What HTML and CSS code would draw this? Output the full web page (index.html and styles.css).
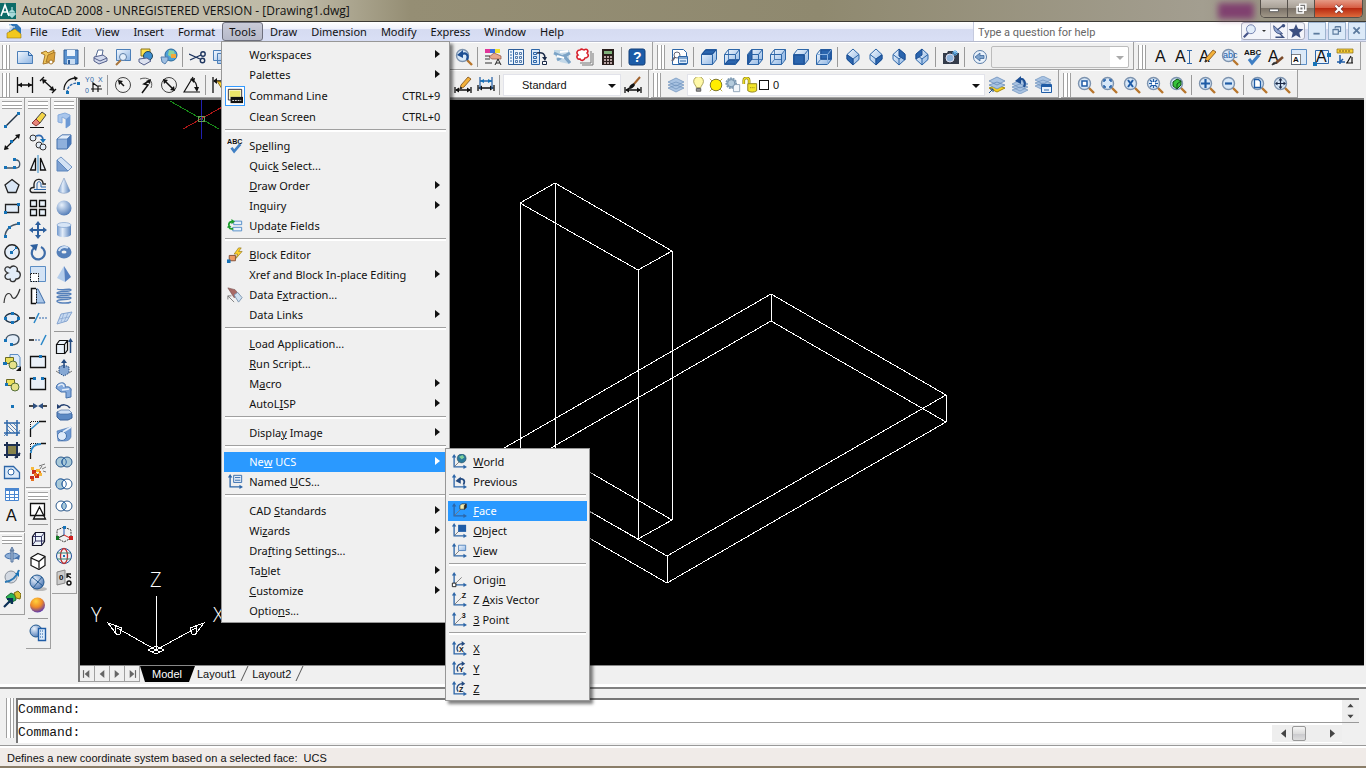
FILE: index.html
```
<!doctype html>
<html lang="en">
  <head>
    <meta charset="UTF-8" />
    <title>AutoCAD 2008 - [Drawing1.dwg]</title>
    <link rel="stylesheet" href="styles.css">
  </head>
  <body>
    <!-- shared icon parts -->
    <svg class="defs" width="0" height="0" aria-hidden="true">
      <defs>
        <linearGradient id="sky" x1="0" y1="0" x2="1" y2="1">
          <stop offset="0" stop-color="#f4f9ff" />
          <stop offset="1" stop-color="#8db4e2" />
        </linearGradient>
        <linearGradient id="solid" x1="0" y1="0" x2="1" y2="0">
          <stop offset="0" stop-color="#6f97cc" />
          <stop offset=".4" stop-color="#e3edf9" />
          <stop offset="1" stop-color="#5580ba" />
        </linearGradient>
        <radialGradient id="ball" cx=".35" cy=".3" r=".8">
          <stop offset="0" stop-color="#e8f1fc" />
          <stop offset="1" stop-color="#4471b0" />
        </radialGradient>
        <radialGradient id="sunset" cx=".4" cy=".25" r=".8">
          <stop offset="0" stop-color="#ffd23c" />
          <stop offset=".5" stop-color="#f08a28" />
          <stop offset="1" stop-color="#4a2fc0" />
        </radialGradient>
      </defs>
      <symbol id="mag" viewBox="0 0 18 18">
        <path d="M11 11l6 6" stroke="#b8762c" stroke-width="2.4" />
        <circle cx="7.5" cy="7.5" r="6" fill="#d8e8f8" stroke="#7d93ae" stroke-width="1.4" />
      </symbol>
      <symbol id="axes" viewBox="0 0 18 18">
        <path d="M3.5 3v11.5H15" stroke="#2d66a8" stroke-width="1.5" />
        <path d="M3.5 0L1 4h5zM18 14.5l-4-2.5v5z" fill="#2d66a8" stroke="none" />
      </symbol>
      <symbol id="turn" viewBox="0 0 18 18">
        <path d="M8 12C5 7 8 3 13 3" stroke="#234a80" stroke-width="1.5" />
        <path d="M12 0l4 3-4 3z" fill="#234a80" stroke="none" />
      </symbol>
      <symbol id="cube" viewBox="0 0 18 18">
        <path d="M1.5 6.5l4-5h11v10l-4 5h-11z" fill="url(#sky)" stroke="#2d66a8" />
        <path d="M1.5 6.5h11v10M12.5 6.5l4-5" stroke="#2d66a8" />
      </symbol>
      <symbol id="glass" viewBox="0 0 18 18">
        <path d="M1.5 6.5l4-5h11v10l-4 5h-11z" fill="url(#sky)" stroke="#2d66a8" />
        <path d="M5.5 1.5v10h11M5.5 11.5l-4 5" stroke="#2d66a8" stroke-width=".8" />
      </symbol>
      <symbol id="iso" viewBox="0 0 18 18">
        <path d="M9 1l6 5.5v5L9 17l-6-5.5v-5z" fill="url(#sky)" stroke="#2d66a8" />
        <path d="M3 6.5L9 11l6-4.5M9 11v6" stroke="#2d66a8" />
      </symbol>
      <symbol id="rings" viewBox="0 0 18 18">
        <circle cx="6" cy="9" r="5" /><circle cx="12" cy="9" r="5" />
      </symbol>
      <symbol id="layers" viewBox="0 0 18 18">
        <path d="M1 12l8-3 8 3-8 4zM1 9l8-3 8 3-8 4zM1 6l8-4 8 4-8 4z" fill="#a9c3e2" stroke="#6d90bb" stroke-width=".7" />
      </symbol>
      <symbol id="dim" viewBox="0 0 18 18">
        <path d="M1 11v6M17 11v6M2 14h14" stroke="#111" stroke-width="1.3" />
        <path d="M1 14l4-2.500v5zM17 14l-4-2.500v5z" fill="#111" stroke="none" />
      </symbol>
      <symbol id="pencil" viewBox="0 0 18 18">
        <path d="M5 13l1-4 7-8 3 2-7 8z" fill="#f3b13a" stroke="#7a4a14" stroke-width=".8" />
        <path d="M5 13l2-1-1.3-1z" fill="#111" />
      </symbol>
    </svg>

    <header class="titlebar">
      <svg class="ico app-logo" viewBox="0 0 16 16" aria-hidden="true">
        <path d="M0 0h16v16H0z" fill="#0d6b68" stroke="none" />
        <path d="M1 13L5 2l4 11M2 9h5" stroke="#fff" stroke-width="1.6" />
        <path d="M7 11h9M12 4v11M10 8h4v5h-4z" stroke="#dff" />
      </svg>
      <h1>AutoCAD 2008 - UNREGISTERED VERSION - [Drawing1.dwg]</h1>
      <span class="glass-spot"></span>
      <div class="window-buttons">
        <button aria-label="Minimize"><svg class="ico" viewBox="0 0 18 18"><path d="M4 9h10v3H4z" fill="#fff" stroke="#555" /></svg></button>
        <button aria-label="Restore"><svg class="ico" viewBox="0 0 18 18"><path d="M7.5 3.500h7v7h-7zM4.5 6.500h7v7h-7z" fill="#777" stroke="#fff" stroke-width="1.6" /></svg></button>
        <button class="close" aria-label="Close"><svg class="ico" viewBox="0 0 18 18"><path d="M5 5l8 8M13 5l-8 8" stroke="#733" stroke-width="4" /><path d="M5 5l8 8M13 5l-8 8" stroke="#fff" stroke-width="2.5" /></svg></button>
      </div>
    </header>

    <nav class="menubar">
      <svg class="ico" viewBox="0 0 18 18" aria-hidden="true">
        <path d="M4 2h8l4 4v10H4z" fill="#2e75b8" stroke="none" />
        <path d="M2 16V11l8-4 6 5v4z" fill="#f2c81e" stroke="#9a7a12" stroke-width=".6" />
        <path d="M1 5h9M5 1v8M4 4h3v3H4z" stroke="#fff" />
      </svg>
      <ul class="menus">
        <li><button>File</button></li>
        <li><button>Edit</button></li>
        <li><button>View</button></li>
        <li><button>Insert</button></li>
        <li><button>Format</button></li>
        <li class="open">
          <button aria-expanded="true">Tools</button>
          <ul class="menu">
            <li class="sub"><button>W<u>o</u>rkspaces</button></li>
            <li class="sub"><button>Palettes</button></li>
            <li class="checked"><button><svg class="ico" viewBox="0 0 18 18"><path d="M1.5 1.500h15v12h-15z" fill="#fffbe0" stroke="#223" /><path d="M3 3h12v7H3z" fill="#ece66a" stroke="none" /><path d="M4 10h14v7H4z" fill="#111" stroke="none" /><path d="M6 14h10" stroke="#fff" stroke-dasharray="2 1" /></svg>Command Line<kbd>CTRL+9</kbd></button></li>
            <li><button>Clean Screen<kbd>CTRL+0</kbd></button></li>
            <li class="rule"></li>
            <li><button><svg class="ico" viewBox="0 0 18 18"><text x="0" y="7" class="tiny">ABC</text><path d="M5 11l3 4 7-8" stroke="#3f7fc4" stroke-width="3" /></svg>Sp<u>e</u>lling</button></li>
            <li><button>Quic<u>k</u> Select...</button></li>
            <li class="sub"><button><u>D</u>raw Order</button></li>
            <li class="sub"><button>In<u>q</u>uiry</button></li>
            <li><button><svg class="ico" viewBox="0 0 18 18"><path d="M7.5 3.500h9v4h-9zM6.5 10.500h10v4h-10z" fill="#e7f1fb" stroke="#4a86c4" /><path d="M2 8c0-3 1-4 4-4M7 12c-3 1-4 0-5-2" stroke="#1a9c2b" stroke-width="2" /><path d="M5 1l4 3-4 3zM0 11l2-4 3 3z" fill="#1a9c2b" stroke="none" /></svg>Upda<u>t</u>e Fields</button></li>
            <li class="rule"></li>
            <li><button><svg class="ico" viewBox="0 0 18 18"><path d="M2.5 9.500h7v6h-7z" fill="#ef9a63" stroke="#7c4a33" /><path d="M0 14h4v4H0z" class="node" /><path d="M13 1L8 8h4l-2 5 7-8h-4l3-4z" fill="#ffd42a" stroke="#8a6a10" stroke-width=".7" /></svg><u>B</u>lock Editor</button></li>
            <li class="sub"><button>Xref and Block In-place Editing</button></li>
            <li><button><svg class="ico" viewBox="0 0 18 18"><path d="M1 1l8 2 4 5-5 4z" fill="#a86a66" stroke="#7b5350" stroke-width=".7" /><path d="M8 9l4-3 5 6-4 5z" fill="#cfe0f0" stroke="#7890ab" /><path d="M1 10l7 7M1 14v-4h4" class="gray" /></svg>Data E<u>x</u>traction...</button></li>
            <li class="sub"><button>Data Links</button></li>
            <li class="rule"></li>
            <li><button><u>L</u>oad Application...</button></li>
            <li><button><u>R</u>un Script...</button></li>
            <li class="sub"><button>M<u>a</u>cro</button></li>
            <li class="sub"><button>AutoL<u>I</u>SP</button></li>
            <li class="rule"></li>
            <li class="sub"><button>Displa<u>y</u> Image</button></li>
            <li class="rule"></li>
            <li class="sub active">
              <button aria-expanded="true">Ne<u>w</u> UCS</button>
              <ul class="menu submenu">
                <li><button><svg class="ico" viewBox="0 0 18 18"><use href="#axes" /><path d="M4 14l6-6" class="gray" /><circle cx="12" cy="5" r="5" fill="#2c7a9c" stroke="#245" stroke-width=".6" /><path d="M9 3l4-2 2 3-3 2z" fill="#7fd09a" stroke="none" /></svg><u>W</u>orld</button></li>
                <li><button><svg class="ico" viewBox="0 0 18 18"><use href="#axes" /><path d="M14 12c3-6-2-8-6-5" stroke="#234a80" stroke-width="2" /><path d="M5 8l6-5v8z" fill="#234a80" stroke="none" /></svg>Previous</button></li>
                <li class="rule"></li>
                <li class="active"><button><svg class="ico" viewBox="0 0 18 18"><use href="#axes" /><path d="M4 14l7-7" class="gray" /><path d="M10 3l2-2h5v4l-2 2h-5z" fill="#f3ecae" stroke="#333" stroke-width=".8" /><path d="M15 3l2-2v4l-2 2z" fill="#222" /></svg><u>F</u>ace</button></li>
                <li><button><svg class="ico" viewBox="0 0 18 18"><use href="#axes" /><path d="M4 14l5-5" class="gray" /><path d="M8 2h9v8H8z" fill="#1f5ca6" stroke="none" /></svg><u>O</u>bject</button></li>
                <li><button><svg class="ico" viewBox="0 0 18 18"><use href="#axes" /><path d="M4 14l5-5" class="gray" /><path d="M8.5 2.500h8v6h-8z" fill="url(#sky)" stroke="#4f81bb" /></svg><u>V</u>iew</button></li>
                <li class="rule"></li>
                <li><button><svg class="ico" viewBox="0 0 18 18"><use href="#axes" /><path d="M4 14l8-8" class="gray" /><path d="M1.5 12.500h4v4h-4z" fill="#fff" stroke="#111" /></svg>Origi<u>n</u></button></li>
                <li><button><svg class="ico" viewBox="0 0 18 18"><use href="#axes" /><path d="M4 14l8-8" class="gray" /><text x="12" y="7" class="tiny">Z</text></svg>Z <u>A</u>xis Vector</button></li>
                <li><button><svg class="ico" viewBox="0 0 18 18"><use href="#axes" /><path d="M4 14l8-8" class="gray" /><text x="12" y="7" class="tiny">3</text></svg><u>3</u> Point</button></li>
                <li class="rule"></li>
                <li><button><svg class="ico" viewBox="0 0 18 18"><use href="#axes" /><use href="#turn" /><text x="9" y="12" class="tiny">X</text></svg><u>X</u></button></li>
                <li><button><svg class="ico" viewBox="0 0 18 18"><use href="#axes" /><use href="#turn" /><text x="9" y="12" class="tiny">Y</text></svg><u>Y</u></button></li>
                <li><button><svg class="ico" viewBox="0 0 18 18"><use href="#axes" /><use href="#turn" /><text x="9" y="12" class="tiny">Z</text></svg><u>Z</u></button></li>
              </ul>
            </li>
            <li><button><svg class="ico" viewBox="0 0 18 18"><use href="#axes" /><path d="M7.5 1.500h9v8h-9z" fill="#e4eefa" stroke="#2d66a8" /><path d="M9 4h6M9 7h6" class="blue" /></svg>Named <u>U</u>CS...</button></li>
            <li class="rule"></li>
            <li class="sub"><button>CAD <u>S</u>tandards</button></li>
            <li class="sub"><button>Wi<u>z</u>ards</button></li>
            <li><button>Dra<u>f</u>ting Settings...</button></li>
            <li class="sub"><button>Ta<u>b</u>let</button></li>
            <li class="sub"><button><u>C</u>ustomize</button></li>
            <li><button>Optio<u>n</u>s...</button></li>
          </ul>
        </li>
        <li><button>Draw</button></li>
        <li><button>Dimension</button></li>
        <li><button>Modify</button></li>
        <li><button>Express</button></li>
        <li><button>Window</button></li>
        <li><button>Help</button></li>
      </ul>
      <input class="ask" type="text" placeholder="Type a question for help" aria-label="Type a question for help">
      <div class="info-buttons">
        <button aria-label="Search"><svg class="ico" viewBox="0 0 18 18"><path d="M7 11l-5 5" stroke="#46558a" stroke-width="2.5" /><circle cx="10" cy="7" r="5" fill="#e2ecfa" stroke="#6878a8" /></svg></button>
        <button class="drop" aria-label="Search options"></button>
        <button aria-label="Communication Center"><svg class="ico" viewBox="0 0 18 18"><path d="M3 3c0 7 4 10 10 9z" fill="#8fa4cf" stroke="#3d5080" /><path d="M7 8l6-5M5 16h9l-4-4" stroke="#3d5080" stroke-width="1.5" /><circle cx="14" cy="3" r="2" fill="#3d5080" stroke="none" /></svg></button>
        <button aria-label="Favorites"><svg class="ico" viewBox="0 0 18 18"><path d="M9 1l2.3 5.500 6 .5-4.6 4 1.4 6L9 13.800 3.900 17l1.400-6L.7 7l6-.5z" fill="#3d5080" stroke="none" /></svg></button>
      </div>
      <div class="doc-buttons">
        <button aria-label="Minimize drawing"><svg class="ico" viewBox="0 0 18 18"><path d="M5 12h7" stroke="#5b7a9d" stroke-width="2" /></svg></button>
        <button aria-label="Restore drawing"><svg class="ico" viewBox="0 0 18 18"><path d="M7 6V4.500h6v5h-2M4.500 7.500h6v5h-6zM7 4h6M5 7h6" stroke="#5b7a9d" stroke-width="1.3" /></svg></button>
        <button aria-label="Close drawing"><svg class="ico" viewBox="0 0 18 18"><path d="M5 5l7 7M12 5l-7 7" stroke="#5b7a9d" stroke-width="2" /></svg></button>
      </div>
    </nav>

    <div class="toolbar-row">
      <div class="toolbar">
        <span class="grip"></span>
        <button aria-label="New"><svg class="ico" viewBox="0 0 18 18"><path d="M1.5 3.500h11l4 4v8h-15z" fill="url(#sky)" stroke="#4c7fb8" /><path d="M12.5 3.500v4h4" class="blue" /></svg></button>
        <button aria-label="Open"><svg class="ico" viewBox="0 0 18 18"><path d="M2 5l5-2 2 2 6-3-2 12-9 2 2-9z" fill="#f0c85c" stroke="#a8782a" /><path d="M7 14l2-7 7-3-1 10z" fill="#d9a13a" stroke="#a8782a" /><circle cx="12" cy="14" r="2" fill="#fff" stroke="#a8782a" /></svg></button>
        <button aria-label="Save"><svg class="ico" viewBox="0 0 18 18"><path d="M2 2h14v14H2z" fill="#5b92cf" stroke="#2d5d98" /><path d="M5 2h8v6H5z" fill="#eaf3fc" stroke="none" /><path d="M5 11h8v5H5z" fill="#c8dcf2" stroke="none" /><path d="M6 12h2v4H6z" fill="#2d5d98" stroke="none" /></svg></button>
        <span class="sep"></span>
        <button aria-label="Plot"><svg class="ico" viewBox="0 0 18 18"><path d="M5 8l2-6h5l-1 6" fill="#fff" stroke="#556b94" /><path d="M3 9l9-2 4 3v3l-8 3-5-3z" fill="#d2d9ec" stroke="#55608c" /><path d="M3 10l6 3 7-3" stroke="#55608c" /></svg></button>
        <button aria-label="Plot Preview"><svg class="ico" viewBox="0 0 18 18"><path d="M2.5 1.500h14v11h-14z" fill="url(#sky)" stroke="#4c7fb8" /><path d="M7 12l-5 5" stroke="#a8743a" stroke-width="2" /><circle cx="9" cy="9" r="3.5" fill="#e2eefa" stroke="#5d7fa8" /></svg></button>
        <button aria-label="Publish"><svg class="ico" viewBox="0 0 18 18"><path d="M4 1h9v7H4z" fill="#ffe34c" stroke="#8a7420" /><circle cx="11" cy="8" r="4.5" fill="#3f8fd0" stroke="#245" /><path d="M2 11l8-1 4 3-7 4-5-3z" fill="#dde2f0" stroke="#55608c" /></svg></button>
        <button aria-label="3D DWF"><svg class="ico" viewBox="0 0 18 18"><circle cx="11" cy="7" r="6" fill="#4aa0d8" stroke="#2c6898" /><path d="M9 2l5 1 1 4-4 2-3-2z" fill="#8fd49a" stroke="none" /><path d="M11 6h5v4h-5z" fill="#f2a83c" stroke="none" /><path d="M1 9h7v3l-3 4-3-2z" fill="#9fbfe2" stroke="#557fae" /></svg></button>
        <span class="sep"></span>
        <button aria-label="Cut"><svg class="ico" viewBox="0 0 18 18"><path d="M0 6l11 5M1 12l11-5" stroke="#1d355f" stroke-width="1.3" /><circle cx="14" cy="6" r="2.2" stroke="#1d355f" stroke-width="1.4" /><circle cx="13.5" cy="12.5" r="2.2" stroke="#1d355f" stroke-width="1.4" /></svg></button>
        <button aria-label="Copy"><svg class="ico" viewBox="0 0 18 18"><path d="M1.5 2.500h10v10h-10zM5.5 5.500h10v10h-10z" fill="url(#sky)" stroke="#4c7fb8" /></svg></button>
        <button aria-label="Paste"><svg class="ico" viewBox="0 0 18 18"><path d="M3 3h11v13H3z" fill="#d9a13a" stroke="#865" /></svg></button>
        <button aria-label="Match Properties"><svg class="ico" viewBox="0 0 18 18"><use href="#pencil" /></svg></button>
        <button aria-label="Block Editor"><svg class="ico" viewBox="0 0 18 18"><use href="#cube" /></svg></button>
        <span class="sep"></span>
        <button class="wide" aria-label="Undo"><svg class="ico" viewBox="0 0 18 18"><path d="M3 9c3-6 11-4 12 4" class="blue" /></svg></button>
        <button class="wide" aria-label="Redo"><svg class="ico" viewBox="0 0 18 18"><path d="M15 9c-3-6-11-4-12 4" class="blue" /></svg></button>
        <span class="sep"></span>
        <button aria-label="Pan"><svg class="ico" viewBox="0 0 18 18"><path d="M4 9l3-6h6l2 7-4 6H7z" fill="#fff" /></svg></button>
        <button aria-label="Zoom Realtime"><svg class="ico" viewBox="0 0 18 18"><use href="#mag" /></svg></button>
        <button aria-label="Zoom Window"><svg class="ico" viewBox="0 0 18 18"><use href="#mag" /></svg></button>
        <button aria-label="Zoom Previous"><svg class="ico" viewBox="0 0 18 18"><use href="#mag" /><path d="M12 12c2-5-1-8-5-6" stroke="#1d4f94" stroke-width="2.2" /><path d="M2 7l6-5v8z" fill="#1d4f94" stroke="none" /></svg></button>
        <span class="sep"></span>
        <button aria-label="Properties"><svg class="ico" viewBox="0 0 18 18"><path d="M1 1h5v4H1z" fill="#e0359a" stroke="none" /><path d="M6 1h5v4H6z" fill="#3c6fe0" stroke="none" /><path d="M11 1h5v4h-5z" fill="#f0e030" stroke="none" /><path d="M5 9l5-4 7 3v3H8z" fill="#e7a88c" stroke="#8a4f40" stroke-width=".7" /><path d="M1 8h5M1 11h5M1 15h7" stroke="#333" /><path d="M11 17l3-6 3 6M12 15h4" stroke="#222" /></svg></button>
        <button aria-label="DesignCenter"><svg class="ico" viewBox="0 0 18 18"><path d="M1.5 1.500h15v15h-15z" fill="#eef5fc" stroke="#2d5d98" /><path d="M6.5 2v14" class="blue" /><path d="M3 4h2M3 7h2M3 10h2M3 13h2" class="blue" /><path d="M8.5 4.500h2v2h-2zM12.5 4.500h2v2h-2zM8.5 8.500h2v2h-2zM12.5 8.500h2v2h-2zM8.5 12.500h2v2h-2zM12.5 12.500h2v2h-2z" stroke="#2d5d98" stroke-width=".8" /></svg></button>
        <button aria-label="Tool Palettes"><svg class="ico" viewBox="0 0 18 18"><path d="M1.5 1.500h8v15h-8z" fill="#dbe9f8" stroke="#2d66a8" /><path d="M3.5 4.500h3v2h-3zM3.5 8.500h3v2h-3zM3.5 12.500h3v2h-3z" class="blue" /><path d="M7 5c6-1 8 1 8 5" stroke="#1b2a48" stroke-width="1.5" /><path d="M12 9h5l-2 4z" fill="#1b2a48" stroke="none" /><path d="M12.5 13.500h4v3h-4z" fill="#fff" stroke="#1b2a48" /></svg></button>
        <button aria-label="Sheet Set Manager"><svg class="ico" viewBox="0 0 18 18"><path d="M1 2h15v14l-9-2-6-8z" fill="#c3d8e8" stroke="none" /><path d="M1 5l9 4 7-4M4 12l7-4 6 7" stroke="#7ba3c6" stroke-width="3" /><path d="M4 8l7 2M7 4l8-1" stroke="#fff" stroke-width="2" /></svg></button>
        <button aria-label="Markup Set Manager"><svg class="ico" viewBox="0 0 18 18"><path d="M6 17h11V5M4 15h11V3" class="gray" /><path d="M4 2c2-2 3 0 4 0 3-2 5 1 3 3 3 3 0 5-2 5-1 3-4 3-5 1-3 1-4-3-2-4-2-2-1-5 2-5z" fill="#fff" stroke="#d8202c" stroke-width="1.6" /></svg></button>
        <button aria-label="QuickCalc"><svg class="ico" viewBox="0 0 18 18"><path d="M3 1h12v16H3z" fill="#2a1f1c" stroke="none" /><path d="M5 3h8v3H5z" fill="#7fb27a" stroke="none" /><path d="M5 9h8M5 12h8M5 15h8" stroke="#e8d0d0" stroke-width="1.6" stroke-dasharray="2 1" /></svg></button>
        <span class="sep"></span>
        <button aria-label="Help"><svg class="ico" viewBox="0 0 18 18"><rect x="1" y="1" width="16" height="16" rx="2" fill="#1c5ca8" stroke="#123f78" /><text x="5" y="14" class="help-mark">?</text></svg></button>
      </div>

      <div class="toolbar">
        <span class="grip"></span>
        <button aria-label="Named Views"><svg class="ico" viewBox="0 0 18 18"><path d="M1.5 1.500h11l3 3v12h-14z" fill="#fff" stroke="#2d66a8" /><circle cx="6" cy="7" r="3" stroke="#667" /><path d="M4 9l-3 4" stroke="#667" stroke-width="2" /><path d="M7.5 8.500h9v7h-9z" fill="#dcebfa" stroke="#2d66a8" /><path d="M8 10h8M9 13h6" class="blue" /></svg></button>
        <span class="sep"></span>
        <button aria-label="Top"><svg class="ico" viewBox="0 0 18 18"><use href="#cube" /><path d="M2 6l4-4h10l-4 4z" class="face" /></svg></button>
        <button aria-label="Bottom"><svg class="ico" viewBox="0 0 18 18"><use href="#glass" /><path d="M2 16l4-4h10l-4 4z" class="face" /><path d="M1.5 6.500h11v10M12.5 6.500l4-5" class="blue" /></svg></button>
        <button aria-label="Left"><svg class="ico" viewBox="0 0 18 18"><use href="#glass" /><path d="M2 7l4-5v9l-4 5z" class="face" /><path d="M1.5 6.500h11v10M12.5 6.500l4-5" class="blue" /></svg></button>
        <button aria-label="Right"><svg class="ico" viewBox="0 0 18 18"><use href="#glass" /><path d="M1.5 6.500h11v10M12.5 6.500l4-5" class="blue" /><path d="M13 7l3-4v8l-3 4z" fill="#9dbfe8" stroke="none" /></svg></button>
        <button aria-label="Front"><svg class="ico" viewBox="0 0 18 18"><use href="#cube" /><path d="M2 7h10v9H2z" class="face" /></svg></button>
        <button aria-label="Back"><svg class="ico" viewBox="0 0 18 18"><use href="#glass" /><path d="M6 2h10v9H6z" class="face" /><path d="M1.5 6.500h11v10M12.5 6.500l4-5" stroke="#8db4e2" /></svg></button>
        <span class="sep"></span>
        <button aria-label="SW Isometric"><svg class="ico" viewBox="0 0 18 18"><use href="#iso" /><path d="M3 7l6 4v6l-6-6z" class="face" /></svg></button>
        <button aria-label="SE Isometric"><svg class="ico" viewBox="0 0 18 18"><use href="#iso" /><path d="M15 7l-6 4v6l6-6z" class="face" /></svg></button>
        <button aria-label="NE Isometric"><svg class="ico" viewBox="0 0 18 18"><use href="#iso" /><path d="M9 1l6 5v6L9 8z" class="face" /></svg></button>
        <button aria-label="NW Isometric"><svg class="ico" viewBox="0 0 18 18"><use href="#iso" /><path d="M9 1L3 6v5l6-4z" class="face" /></svg></button>
        <span class="sep"></span>
        <button aria-label="Create Camera"><svg class="ico" viewBox="0 0 18 18"><path d="M1 5h4l1-2h5l1 2h5v11H1z" fill="#343c4a" stroke="none" /><circle cx="8" cy="10" r="4" fill="#8fb5dc" stroke="#dde" /><path d="M13 2v6M10 5h6M11 3l4 4M15 3l-4 4" stroke="#59a9e6" /></svg></button>
        <span class="sep"></span>
        <button aria-label="Previous View"><svg class="ico" viewBox="0 0 18 18"><circle cx="9" cy="9" r="6.5" fill="#eaf2fb" stroke="#5a7da8" /><path d="M4 9l5-4v2.500h4v3H9V13z" fill="#7fa3cc" stroke="#2f5c92" stroke-width=".7" /></svg></button>
        <div class="combo view-combo disabled"><select aria-label="View control" disabled><option></option></select></div>
      </div>

      <div class="toolbar">
        <span class="grip"></span>
        <button aria-label="Multiline Text"><svg class="ico" viewBox="0 0 18 18"><text x="3" y="14" class="letter">A</text></svg></button>
        <button aria-label="Single Line Text"><svg class="ico" viewBox="0 0 18 18"><text x="0" y="14" class="letter">A</text><path d="M12 2.500h5M12 15.500h5M14.500 3v12" class="blue" /></svg></button>
        <button aria-label="Edit Text"><svg class="ico" viewBox="0 0 18 18"><text x="1" y="14" class="letter">A</text><use href="#pencil" x="2" y="1" /></svg></button>
        <button aria-label="Find and Replace"><svg class="ico" viewBox="0 0 18 18"><use href="#mag" /><text x="2" y="10" class="small">abc</text></svg></button>
        <button aria-label="Spell Check"><svg class="ico" viewBox="0 0 18 18"><text x="0" y="7" class="tiny">ABC</text><path d="M5 11l3 4 7-8" stroke="#3f7fc4" stroke-width="3" /></svg></button>
        <button aria-label="Text Style"><svg class="ico" viewBox="0 0 18 18"><text x="1" y="14" class="letter">A</text><path d="M9 15l7-6" stroke="#7a4a2a" stroke-width="2.5" /><path d="M5 17c1-3 3-3 5-2z" fill="#222" /></svg></button>
        <button aria-label="Scale Text"><svg class="ico" viewBox="0 0 18 18"><path d="M1.5 1.500h15v15h-15z" fill="#dbe9f8" stroke="#5b8dc4" /><path d="M1.5 6.500h9v10h-9z" fill="#fff" stroke="#111" stroke-dasharray="1 1" /><text x="3" y="14" class="tiny">A</text></svg></button>
        <button aria-label="Justify Text"><svg class="ico" viewBox="0 0 18 18"><path d="M2.5 2.500h13v13h-13z" fill="#eaf2fb" stroke="#2d66a8" /><text x="3" y="14" class="letter">A</text><path d="M0 14h4v4H0zM14 5h4v4h-4z" class="node" /></svg></button>
        <button aria-label="Convert Distance"><svg class="ico" viewBox="0 0 18 18"><path d="M1 1h16v4H1z" fill="#f6cf3a" stroke="#8a6a10" stroke-width=".7" /><path d="M4 2v2M7 2v2M10 2v2M13 2v2" stroke="#7a5a10" /><path d="M4 7v9M1 14h8M3 15l4-4" stroke="#1f5ca6" stroke-width="1.5" /><path d="M11 15l4-7M10 15h7M16 9v6" stroke="#111" stroke-width="1.2" /></svg></button>
      </div>
    </div>

    <div class="toolbar-row">
      <div class="toolbar">
        <span class="grip"></span>
        <button aria-label="Linear"><svg class="ico" viewBox="0 0 18 18"><path d="M1.5 1v16M16.5 1v16M2 9h14" stroke="#111" stroke-width="1.3" /><path d="M2 9l4-2.500v5zM16 9l-4-2.500v5z" class="dot" /></svg></button>
        <button aria-label="Aligned"><svg class="ico" viewBox="0 0 18 18"><path d="M1 5l4-4M13 17l4-4M4 4l11 10" stroke="#111" stroke-width="1.3" /><path d="M3 3l5 1-4 4zM15 15l-5-1 4-4z" class="dot" /></svg></button>
        <button aria-label="Arc Length"><svg class="ico" viewBox="0 0 18 18"><path d="M2 14C2 7 7 2 14 2" stroke="#111" stroke-width="1.3" /><path d="M5 17c0-6 4-10 11-10" stroke="#2d66a8" stroke-dasharray="3 1" stroke-width="1.3" /><path d="M4 15h3v3H4zM15 6h3v3h-3z" class="node" /><path d="M12 0l4 2-3 3z" class="dot" /></svg></button>
        <button aria-label="Ordinate"><svg class="ico" viewBox="0 0 18 18"><text x="0" y="6" class="tiny-blue">Y</text><text x="5" y="6" class="tiny-blue">0</text><text x="13" y="6" class="tiny-blue">X</text><text x="0" y="17" class="tiny-blue">0</text><path d="M8 16V7l4 3h4M6 13h11M13 10v6" stroke="#111" stroke-width="1.2" /></svg></button>
        <span class="sep"></span>
        <button aria-label="Radius"><svg class="ico" viewBox="0 0 18 18"><circle cx="9" cy="9" r="7.5" stroke="#444" /><path d="M5 5l5 5" stroke="#111" stroke-width="1.5" /><path d="M4 4l5 1-4 4z" class="dot" /></svg></button>
        <button aria-label="Jogged"><svg class="ico" viewBox="0 0 18 18"><path d="M3 3c8-3 14 2 11 9" stroke="#555" /><path d="M12 5l-5 3 4 1-6 8" stroke="#111" stroke-width="1.5" /><path d="M14 3l-1 5-4-3z" class="dot" /></svg></button>
        <button aria-label="Diameter"><svg class="ico" viewBox="0 0 18 18"><circle cx="9" cy="9" r="7.5" stroke="#444" /><path d="M4 4l10 10" stroke="#111" stroke-width="1.5" /><path d="M3 3l5 1-4 4zM15 15l-5-1 4-4z" class="dot" /></svg></button>
        <button aria-label="Angular"><svg class="ico" viewBox="0 0 18 18"><path d="M10 1L1 16h16M9 4c4 1 5 5 5 10" stroke="#111" stroke-width="1.2" /><path d="M7 3l5-1-1 5zM14 16l-3-5h5z" class="dot" /></svg></button>
        <span class="sep"></span>
        <button aria-label="Quick Dimension"><svg class="ico" viewBox="0 0 18 18"><path d="M1 1v16M2 5h12" stroke="#111" stroke-width="1.3" /><path d="M1 5l4-3v6z" class="dot" /><path d="M5 5l10 3-3 8z" fill="#ffd42a" stroke="#8a6a10" /></svg></button>
        <button aria-label="Baseline"><svg class="ico" viewBox="0 0 18 18"><use href="#dim" /></svg></button>
        <button aria-label="Continue"><svg class="ico" viewBox="0 0 18 18"><use href="#dim" /></svg></button>
        <span class="sep"></span>
        <button aria-label="Dimension Space"><svg class="ico" viewBox="0 0 18 18"><use href="#dim" /></svg></button>
        <button aria-label="Dimension Break"><svg class="ico" viewBox="0 0 18 18"><use href="#dim" /></svg></button>
        <button aria-label="Tolerance"><svg class="ico" viewBox="0 0 18 18"><path d="M1.5 6.500h15v6h-15z" /></svg></button>
        <button aria-label="Center Mark"><svg class="ico" viewBox="0 0 18 18"><circle cx="9" cy="9" r="7" /></svg></button>
        <button aria-label="Inspection"><svg class="ico" viewBox="0 0 18 18"><use href="#dim" /></svg></button>
        <button aria-label="Jogged Linear"><svg class="ico" viewBox="0 0 18 18"><use href="#dim" /></svg></button>
        <span class="sep"></span>
        <button aria-label="Dimension Edit"><svg class="ico" viewBox="0 0 18 18"><use href="#dim" /></svg></button>
        <button aria-label="Dimension Text Edit"><svg class="ico" viewBox="0 0 18 18"><use href="#dim" /><use href="#pencil" x="1" /></svg></button>
        <button aria-label="Dimension Update"><svg class="ico" viewBox="0 0 18 18"><use href="#dim" y="-2" /><path d="M3 1v12M15 1v12M3 5h12" stroke="#2d66a8" stroke-width="1.3" /><path d="M3 5l4-2v4zM15 5l-4-2v4z" class="node" /></svg></button>
        <span class="sep"></span>
        <div class="combo style-combo"><select aria-label="Dimension style"><option>Standard</option></select></div>
        <button aria-label="Dimension Style"><svg class="ico" viewBox="0 0 18 18"><use href="#dim" /><path d="M10 8l6-7" stroke="#a0612c" stroke-width="2" /><path d="M5 13c0-4 3-5 5-6l1 2c-1 2-3 4-6 4z" class="dot" /></svg></button>
      </div>

      <div class="toolbar">
        <span class="grip"></span>
        <button aria-label="Layer Properties"><svg class="ico" viewBox="0 0 18 18"><use href="#layers" /></svg></button>
        <div class="combo layer-combo">
          <svg class="ico" viewBox="0 0 18 18"><path d="M6 12c0-2-3-4-3-7a5 5 0 0 1 11 0c0 3-3 5-3 7z" fill="#fff9a8" stroke="#a29a50" /><path d="M6 13h5v3H6z" fill="#999" stroke="#555" /></svg>
          <svg class="ico" viewBox="0 0 18 18"><path d="M2 2l14 14M16 2L2 16" stroke="#b0a030" /><circle cx="9" cy="9" r="6.5" fill="#ffee00" stroke="#706820" /></svg>
          <svg class="ico" viewBox="0 0 18 18"><circle cx="7" cy="7" r="5.5" fill="#9dbad0" stroke="#7f9ab2" stroke-dasharray="2 1" stroke-width="2" /><path d="M9.5 8.500h7v8h-7z" fill="#f2f6fa" stroke="#8ba0b4" /><circle cx="7" cy="7" r="4" fill="#b4cbdc" stroke="#6f8ba6" /></svg>
          <svg class="ico" viewBox="0 0 18 18"><path d="M2 8V4c0-4 6-4 6 0v3" stroke="#8a7c10" stroke-width="3" /><path d="M2 8V4c0-4 6-4 6 0v3" stroke="#f2e42a" stroke-width="1.5" /><path d="M6.5 7.500h10v8c-3 2-7 2-10 0z" fill="#f2e42a" stroke="#8a7c10" /><path d="M9 12h5" stroke="#8a7c10" stroke-dasharray="1 1" /></svg>
          <span class="swatch"></span>
          <select aria-label="Layer"><option>0</option></select>
        </div>
        <button aria-label="Make Object's Layer Current"><svg class="ico" viewBox="0 0 18 18"><path d="M1 12l8-3 8 3-8 4z" fill="#f6cf1c" stroke="#a78a10" /><path d="M1 9l8-3 8 3-8 4zM1 5l8-4 8 4-8 4z" fill="#a9c3e2" stroke="#5d83b3" stroke-width=".7" /><path d="M1 17l4-4M5 16v-3H2" stroke="#1d4f94" /></svg></button>
        <button aria-label="Layer Previous"><svg class="ico" viewBox="0 0 18 18"><use href="#layers" y="2" /><path d="M13 11c2-5 0-9-5-8" stroke="#1d4f94" stroke-width="2.2" /><path d="M4 5l6-5v8z" fill="#1d4f94" stroke="none" /></svg></button>
        <button aria-label="Layer States Manager"><svg class="ico" viewBox="0 0 18 18"><use href="#layers" y="-2" /><path d="M7.5 8.500h10v8h-10z" fill="#e7f1fc" stroke="#1f5ca6" /><path d="M8 10h9" stroke="#1f5ca6" stroke-width="2" /><path d="M10 14h5" class="blue" /></svg></button>
      </div>

      <div class="toolbar">
        <span class="grip"></span>
        <button aria-label="Zoom Window"><svg class="ico" viewBox="0 0 18 18"><use href="#mag" /><path d="M5 5h5v5H5z" fill="#fff" stroke="#1f5ca6" stroke-width="1.5" /></svg></button>
        <button aria-label="Zoom Dynamic"><svg class="ico" viewBox="0 0 18 18"><use href="#mag" /><path d="M4 6V4h2M9 4h2v2M11 9v2H9M6 11H4V9" stroke="#1f5ca6" stroke-width="1.4" /></svg></button>
        <button aria-label="Zoom Scale"><svg class="ico" viewBox="0 0 18 18"><use href="#mag" /><path d="M5 4l5 7M10 4l-5 7" stroke="#1f5ca6" stroke-width="2" /></svg></button>
        <button aria-label="Zoom Center"><svg class="ico" viewBox="0 0 18 18"><use href="#mag" /><path d="M4 4l7 7M11 4l-7 7M7.5 3v9M3 7.500h9" stroke="#1f5ca6" stroke-width="1.2" /><path d="M6 6h3v3H6z" fill="#fff" stroke="none" /></svg></button>
        <button aria-label="Zoom Object"><svg class="ico" viewBox="0 0 18 18"><use href="#mag" /><path d="M4 6l4-3 4 2v4l-4 4-4-3z" fill="#35c33a" stroke="#0c4f14" /><path d="M8 8l4-3M8 8v4" stroke="#0c4f14" /></svg></button>
        <span class="sep"></span>
        <button aria-label="Zoom In"><svg class="ico" viewBox="0 0 18 18"><use href="#mag" /><path d="M7.5 3v9M3 7.500h9" stroke="#1f5ca6" stroke-width="2.2" /></svg></button>
        <button aria-label="Zoom Out"><svg class="ico" viewBox="0 0 18 18"><use href="#mag" /><path d="M4 7.500h7" stroke="#1f5ca6" stroke-width="2.2" /></svg></button>
        <span class="sep"></span>
        <button aria-label="Zoom All"><svg class="ico" viewBox="0 0 18 18"><use href="#mag" /><path d="M4.5 3.500h4l2 2v6h-6z" fill="#fff" stroke="#1f5ca6" stroke-width="1.3" /></svg></button>
        <button aria-label="Zoom Extents"><svg class="ico" viewBox="0 0 18 18"><use href="#mag" /><path d="M7.5 3v9M3 7.500h9" stroke="#1b2a48" stroke-width="1.2" /><path d="M7.5 2l2 2.500h-4zM7.5 13l2-2.500h-4zM2 7.500L4.500 5.500v4zM13 7.500l-2.500-2v4z" fill="#1b2a48" stroke="none" /></svg></button>
      </div>
    </div>

    <main class="workspace">
      <div class="dock">
        <div class="dock-column">
          <div class="toolbar vertical">
            <span class="grip"></span>
            <button aria-label="Line"><svg class="ico" viewBox="0 0 18 18"><path d="M3 15L15 3" stroke="#234" stroke-width="1.5" /><path d="M1 14h3v3H1zM14 1h3v3h-3z" class="node" /></svg></button>
            <button aria-label="Construction Line"><svg class="ico" viewBox="0 0 18 18"><path d="M2 16L16 2" stroke="#111" stroke-width="1.3" /><path d="M1 17l1-5 4 4zM17 1l-1 5-4-4z" class="dot" /><path d="M7 7h3v3H7z" class="node" /></svg></button>
            <button aria-label="Polyline"><svg class="ico" viewBox="0 0 18 18"><path d="M3 13h10c5 0 5-8 0-8h-1" stroke="#456" stroke-width="1.3" /><path d="M1 11h3v3H1zM10 11h3v3h-3zM10 3h3v3h-3z" class="node" /></svg></button>
            <button aria-label="Polygon"><svg class="ico" viewBox="0 0 18 18"><path d="M9 2.500l7 5.500-3 7.500H5L2 8z" fill="#d9e6f5" stroke="#222" stroke-width="1.3" /></svg></button>
            <button aria-label="Rectangle"><svg class="ico" viewBox="0 0 18 18"><path d="M2.5 5.500h13v8h-13z" fill="#e3edf8" stroke="#222" stroke-width="1.3" /><path d="M1 12h3v3H1zM14 4h3v3h-3z" class="node" /></svg></button>
            <button aria-label="Arc"><svg class="ico" viewBox="0 0 18 18"><path d="M2 16C2 9 8 3 16 3" stroke="#456" stroke-width="1.4" /><path d="M1 14h3v3H1zM5 5h3v3H5zM14 1h3v3h-3z" class="node" /></svg></button>
            <button aria-label="Circle"><svg class="ico" viewBox="0 0 18 18"><circle cx="9" cy="9" r="7.2" fill="#e3edf8" stroke="#222" stroke-width="1.4" /><path d="M9 9l4-4" class="blue" /><path d="M7 8h3v3H7zM12 4h2v2h-2z" class="node" /></svg></button>
            <button aria-label="Revision Cloud"><svg class="ico" viewBox="0 0 18 18"><path d="M5 8C-1 6 3-1 7 3c3-4 9-1 7 3 5 1 4 8-1 8-1 4-6 3-6 0-5 2-7-4-2-6z" fill="#e3edf8" stroke="#333" stroke-width="1.3" /></svg></button>
            <button aria-label="Spline"><svg class="ico" viewBox="0 0 18 18"><path d="M1 16C2 4 7 6 8 8c3 8 7 0 9-6" stroke="#333" stroke-width="1.2" /></svg></button>
            <button aria-label="Ellipse"><svg class="ico" viewBox="0 0 18 18"><ellipse cx="9" cy="9" rx="7" ry="4.5" fill="#e3edf8" stroke="#234" stroke-width="1.4" /><path d="M1 8h3v3H1zM14 8h3v3h-3zM8 3h3v3H8zM8 12h3v3H8z" class="node" /></svg></button>
            <button aria-label="Ellipse Arc"><svg class="ico" viewBox="0 0 18 18"><path d="M3 9c0-7 13-7 13-1 0 4-3 6-8 6" fill="#e3edf8" stroke="#456" stroke-width="1.4" /><path d="M1 8h3v3H1zM7 12h3v3H7z" class="node" /></svg></button>
            <button aria-label="Insert Block"><svg class="ico" viewBox="0 0 18 18"><path d="M7 1.500h8l2 3v9H7z" fill="#dbe9f8" stroke="#5b8dc4" /><path d="M2.5 4.500h8v6h-8z" fill="#eadf5a" stroke="#6d6a20" /><circle cx="10" cy="12" r="4" fill="#e6e28a" stroke="#55703a" /><path d="M0 9h4v3H0z" class="node" /><path d="M18 13v5h-5z" class="dot" /></svg></button>
            <button aria-label="Make Block"><svg class="ico" viewBox="0 0 18 18"><path d="M3.5 4.500h8v6h-8z" fill="#eadf5a" stroke="#6d6a20" /><circle cx="12" cy="12" r="4" fill="#e6e28a" stroke="#55703a" /><path d="M2 8h3v3H2z" class="node" /></svg></button>
            <button aria-label="Point"><svg class="ico" viewBox="0 0 18 18"><path d="M8 8h3v3H8z" class="node" /></svg></button>
            <button aria-label="Hatch"><svg class="ico" viewBox="0 0 18 18"><path d="M4 1v16M14 1v16M1 4h16M1 14h16" stroke="#2d66a8" stroke-width="1.5" /><path d="M4 6l8 8M4 10l4 4M6 4l8 8M10 4l4 4M1 17l4-4M13 17l4-6" stroke="#2d66a8" stroke-width=".8" /></svg></button>
            <button aria-label="Gradient"><svg class="ico" viewBox="0 0 18 18"><path d="M4 4h10v10H4z" fill="#87824a" /><path d="M4 1v16M14 1v16M1 4h16M1 14h16M12 17l5-5" stroke="#1d2f52" stroke-width="2" /></svg></button>
            <button aria-label="Region"><svg class="ico" viewBox="0 0 18 18"><path d="M1.5 3.500h9l6 6v6h-15z" fill="#dbe9f8" stroke="#2d66a8" stroke-width="1.3" /><circle cx="8" cy="9" r="3" fill="#fff" stroke="#2d66a8" /></svg></button>
            <button aria-label="Table"><svg class="ico" viewBox="0 0 18 18"><path d="M2.5 3.500h13v12h-13z" fill="#fff" stroke="#4a86d0" /><path d="M2 3h14v3H2z" fill="#4a86d0" stroke="none" /><path d="M2 9.500h14M2 12.500h14M6.5 5v10M11.5 5v10" stroke="#4a86d0" /></svg></button>
            <button aria-label="Multiline Text"><svg class="ico" viewBox="0 0 18 18"><text x="3" y="14" class="letter">A</text></svg></button>
          </div>
          <div class="toolbar vertical">
            <span class="grip"></span>
            <button aria-label="3D Move"><svg class="ico" viewBox="0 0 18 18"><ellipse cx="9" cy="10" rx="7" ry="3" fill="#8fb0d8" stroke="#4571ab" /><path d="M9 1l2 4H7zM8 4h2v12H8z" fill="#a9bfdc" stroke="#5a78a0" /><path d="M12 12l5-3-1 5z" fill="#4571ab" stroke="none" /></svg></button>
            <button aria-label="3D Orbit"><svg class="ico" viewBox="0 0 18 18"><circle cx="8" cy="9" r="6" fill="#d3d9e2" stroke="#8a929c" /><path d="M2 14C9 13 14 8 16 2" stroke="#2c78b4" stroke-width="2" /><path d="M12 5h4v4z" class="node" /></svg></button>
            <button aria-label="3D Align"><svg class="ico" viewBox="0 0 18 18"><path d="M3 7l5-4 4 2 1 5-6 3z" fill="#2cb455" stroke="#196a34" /><path d="M11 3l4-2 3 3-1 5-4-1z" fill="#d9c02c" stroke="#7c6c10" /><path d="M1 17l8-8M9 14V9H4" stroke="#0c2f57" stroke-width="2.2" /></svg></button>
          </div>
        </div>

        <div class="dock-column">
          <div class="toolbar vertical">
            <span class="grip"></span>
            <button aria-label="Erase"><svg class="ico" viewBox="0 0 18 18"><path d="M1 16.500h14" stroke="#111" /><path d="M7 8l6-7 4 3-6 8z" fill="#f4d548" stroke="#444" /><path d="M3 12l4-4 4 4-4 3z" fill="#e88478" stroke="#833" /></svg></button>
            <button aria-label="Copy Object"><svg class="ico" viewBox="0 0 18 18"><circle cx="4" cy="5" r="3" fill="#e3edf8" /><circle cx="10" cy="12" r="3" fill="#e3edf8" /><circle cx="14" cy="14" r="3" fill="#e3edf8" /><path d="M7 3c5-2 7 1 7 4" stroke="#2c66ac" stroke-width="1.8" /><path d="M11 6h6l-3 4z" class="node" /></svg></button>
            <button aria-label="Mirror"><svg class="ico" viewBox="0 0 18 18"><path d="M6.5 3v12h-5zM11.5 3v12h5z" fill="#e9f0f8" stroke="#111" stroke-width="1.3" /><path d="M9 0v18" stroke="#2c88c8" /></svg></button>
            <button aria-label="Offset"><svg class="ico" viewBox="0 0 18 18"><path d="M17 15.500H3c-3-1-2-5 1-5h1V7c1-6 8-6 9-1v1h3" stroke="#222" stroke-width="1.4" /><path d="M17 12.500H5M8 12V7c0-3 4-3 4 0v3h5" stroke="#2d66a8" /></svg></button>
            <button aria-label="Array"><svg class="ico" viewBox="0 0 18 18"><path d="M1.5 1.500h6v6h-6zM10.5 1.500h6v6h-6zM1.5 10.500h6v6h-6zM10.5 10.500h6v6h-6z" fill="#eaf2fa" stroke="#111" stroke-width="1.3" /></svg></button>
            <button aria-label="Move"><svg class="ico" viewBox="0 0 18 18"><path d="M9 3v12M3 9h12" stroke="#2d5f9e" stroke-width="2" /><path d="M9 0l3 4H6zM9 18l3-4H6zM0 9l4-3v6zM18 9l-4-3v6z" fill="#2d5f9e" stroke="none" /></svg></button>
            <button aria-label="Rotate"><svg class="ico" viewBox="0 0 18 18"><path d="M5 5a6.500 6.500 0 1 0 7-1" stroke="#3d6ca8" stroke-width="2.2" /><path d="M1 2l8-1-2 7z" fill="#2d5f9e" stroke="none" /></svg></button>
            <button aria-label="Scale"><svg class="ico" viewBox="0 0 18 18"><path d="M1.5 1.500h15v15h-15z" fill="#d3e3f5" stroke="#5b8dc4" /><path d="M1.5 8.500h8v8h-8z" fill="#fff" stroke="#111" stroke-dasharray="1.5 1" /></svg></button>
            <button aria-label="Stretch"><svg class="ico" viewBox="0 0 18 18"><path d="M7 2h2l7 14H7z" fill="#a9c6e8" stroke="#3d6ca8" /><path d="M7 1.500H2.500v15H7" fill="#fff" stroke="#111" stroke-width="1.5" /><path d="M7.5 2v14" stroke="#111" stroke-dasharray="1.5 1" /></svg></button>
            <button aria-label="Trim"><svg class="ico" viewBox="0 0 18 18"><path d="M0 9h6" stroke="#111" stroke-width="1.5" /><path d="M5 14l5-10" stroke="#2c88c8" stroke-width="1.5" /><path d="M10 9h8" stroke="#2c66ac" stroke-dasharray="2 1" /></svg></button>
            <button aria-label="Extend"><svg class="ico" viewBox="0 0 18 18"><path d="M0 9h5" stroke="#111" stroke-width="1.5" /><path d="M12 14l5-10" stroke="#2c88c8" stroke-width="1.5" /><path d="M6 9h6" stroke="#2c66ac" stroke-dasharray="2 1" /></svg></button>
            <button aria-label="Break at Point"><svg class="ico" viewBox="0 0 18 18"><path d="M1.5 3.500h15v11h-15z" fill="#e9f0f8" stroke="#111" stroke-width="1.3" /><path d="M10 2h3v3h-3z" class="node" /></svg></button>
            <button aria-label="Break"><svg class="ico" viewBox="0 0 18 18"><path d="M5 3.500H1.500v11h15v-11H14" fill="#e9f0f8" stroke="#111" stroke-width="1.3" /><path d="M4 2h3v3H4zM12 2h3v3h-3z" class="node" /></svg></button>
            <button aria-label="Join"><svg class="ico" viewBox="0 0 18 18"><path d="M0 9h6M12 9h6" stroke="#111" stroke-width="1.5" /><path d="M4 6l5 3-5 3zM14 6L9 9l5 3z" fill="#2d4f80" stroke="none" /></svg></button>
            <button aria-label="Chamfer"><svg class="ico" viewBox="0 0 18 18"><path d="M1.5 10v8M10 2.500h7" stroke="#111" stroke-width="1.3" /><path d="M1.5 10V2.500H10" stroke="#111" stroke-dasharray="1 1" /><path d="M2 10l8-7" stroke="#2c88c8" stroke-width="1.5" /></svg></button>
            <button aria-label="Fillet"><svg class="ico" viewBox="0 0 18 18"><path d="M1.5 12v6M12 2.500h5" stroke="#111" stroke-width="1.3" /><path d="M1.5 10V2.500H10" stroke="#111" stroke-dasharray="1 1" /><path d="M2 12C2 6 6 3 12 3" stroke="#2c88c8" stroke-width="1.8" /></svg></button>
            <button aria-label="Explode"><svg class="ico" viewBox="0 0 18 18"><path d="M2 4h3v3H2zM7 6h4v3H7zM9 10h4v3H9z" fill="#f5b83c" stroke="none" /><path d="M3 7h4v4H3zM6 11h4v4H6zM1 13h4v3H1z" fill="#cc2c1c" stroke="none" /><path d="M5 10h3v3H5zM2 16h3v2H2zM10 8h2v2h-2z" fill="#e8731e" stroke="none" /><path d="M11 6l2-3M13 6l4-2M10 3l6-2M14 8l3 1" class="gray" /></svg></button>
          </div>
          <div class="toolbar vertical">
            <span class="grip"></span>
            <button aria-label="2D Wireframe"><svg class="ico" viewBox="0 0 18 18"><path d="M1.5 1.500h14v12h-14z" fill="#fff" stroke="#111" stroke-width="1.3" /><path d="M10.500 5l6 12h-12z" stroke="#111" stroke-width="1.3" /></svg></button>
            <span class="sep"></span>
            <button aria-label="3D Wireframe"><svg class="ico" viewBox="0 0 18 18"><path d="M3.5 6.500l3-4h9v9l-3 4h-9z" fill="#edf3fa" stroke="#112" stroke-width="1.2" /><path d="M3.5 6.500h9v9M12.5 6.500l3-4M6.5 3v8h9M6.5 11l-3 4" stroke="#225" stroke-width=".9" /></svg></button>
            <button aria-label="3D Hidden"><svg class="ico" viewBox="0 0 18 18"><path d="M9 1.500l7 3v9l-6 4-8-4v-8z" fill="#fff" stroke="#111" stroke-width="1.2" /><path d="M2 6l8 3.500 6-5M10 9.500v7" stroke="#111" stroke-width="1.2" /></svg></button>
            <button aria-label="Realistic"><svg class="ico" viewBox="0 0 18 18"><ellipse cx="11" cy="15" rx="7" ry="2" fill="#bbb" stroke="none" /><circle cx="8" cy="8" r="7" fill="url(#ball)" stroke="#245a90" /><path d="M3 3l11 9M13 3L4 14" stroke="#245a90" /></svg></button>
            <button aria-label="Conceptual"><svg class="ico" viewBox="0 0 18 18"><circle cx="8.5" cy="9" r="7.5" fill="url(#sunset)" stroke="none" /></svg></button>
            <span class="sep"></span>
            <button aria-label="Visual Styles"><svg class="ico" viewBox="0 0 18 18"><circle cx="7" cy="7" r="6" fill="url(#ball)" stroke="#245a90" /><path d="M9.5 4.500h7v12h-7z" fill="#dcebfa" stroke="#1f5ca6" stroke-width="1.4" /><path d="M11 7h4M11 10h4M11 13h4" stroke="#1f5ca6" stroke-dasharray="1 1" /></svg></button>
          </div>
        </div>

        <div class="dock-column">
          <div class="toolbar vertical">
            <span class="grip"></span>
            <button aria-label="Polysolid"><svg class="ico" viewBox="0 0 18 18"><path d="M3 4l7-2 5 2v10l-4 3V8L7 6v6l-4-1z" fill="#a9c6ec" stroke="#86abdc" /><path d="M11 8l4-3v9l-4 3z" fill="#6d99d4" stroke="none" /></svg></button>
            <button aria-label="Box"><svg class="ico" viewBox="0 0 18 18"><path d="M2 6l5-4h9v9l-4 5H2z" fill="#8fb0dc" stroke="#4571ab" /><path d="M2 6l5-4h9l-4 4z" fill="#e3edf9" stroke="#4571ab" stroke-width=".6" /><path d="M12 6l4-4v9l-4 5z" fill="#4a78b8" stroke="none" /></svg></button>
            <button aria-label="Wedge"><svg class="ico" viewBox="0 0 18 18"><path d="M2 5l4-3 11 10-4 4z" fill="#d3e2f4" stroke="#7396c4" /><path d="M2 5v11h11z" fill="#7da1d2" stroke="#5d86bd" /></svg></button>
            <button aria-label="Cone"><svg class="ico" viewBox="0 0 18 18"><path d="M9 1l6 13c-3 3-9 3-12 0z" fill="url(#solid)" stroke="#7d99c0" stroke-width=".6" /></svg></button>
            <button aria-label="Sphere"><svg class="ico" viewBox="0 0 18 18"><circle cx="9" cy="9" r="7.5" fill="url(#ball)" stroke="none" /></svg></button>
            <button aria-label="Cylinder"><svg class="ico" viewBox="0 0 18 18"><path d="M2 4v10c3 3 11 3 14 0V4z" fill="url(#solid)" stroke="none" /><ellipse cx="9" cy="4" rx="7" ry="2.5" fill="#d7e5f6" stroke="#7398ca" stroke-width=".6" /></svg></button>
            <button aria-label="Torus"><svg class="ico" viewBox="0 0 18 18"><ellipse cx="9" cy="9" rx="5" ry="4" stroke="#5580ba" stroke-width="5" /><path d="M4 8c1-4 6-5 9-3" stroke="#cfe0f5" stroke-width="2" /></svg></button>
            <button aria-label="Pyramid"><svg class="ico" viewBox="0 0 18 18"><path d="M9 1L2 13l8 4z" fill="#b4cdeb" stroke="none" /><path d="M9 1l1 16 6-5z" fill="#5580c0" stroke="none" /></svg></button>
            <button aria-label="Helix"><svg class="ico" viewBox="0 0 18 18"><path d="M2 2c3 2 14-1 14 1S2 4 2 6s14-1 14 1S2 8 2 10s14-1 14 1-14 1-14 3 10 3 14 1" stroke="#5580ba" stroke-width="1.5" /></svg></button>
            <button aria-label="Planar Surface"><svg class="ico" viewBox="0 0 18 18"><path d="M6 5l11-2-5 9-10 3z" fill="#c6d9f1" stroke="#86a5d0" /><path d="M4 10l10-2M9 4l-3 9M13 4l-4 9" stroke="#86a5d0" stroke-width=".7" /></svg></button>
            <span class="sep"></span>
            <button aria-label="Extrude"><svg class="ico" viewBox="0 0 18 18"><path d="M1.5 7.500h8v9h-8zM1.5 7.500l3-4h8l-3 4M12.5 4v9l-3 4" fill="#eaf2fa" stroke="#111" stroke-width="1.2" /><path d="M15.5 16V3" stroke="#234a80" stroke-width="1.5" /><path d="M13 5l2.500-4L18 5z" fill="#234a80" stroke="none" /></svg></button>
            <button aria-label="Press/Pull"><svg class="ico" viewBox="0 0 18 18"><path d="M4 8l5-2 5 2v6l-5 3-5-3z" fill="#86a8d4" stroke="#234a80" stroke-dasharray="1.5 1" /><path d="M1 12l3 2M17 12l-3 2" class="gray" /><path d="M9 9V3" stroke="#234a80" stroke-width="1.5" /><path d="M6 4l3-4 3 4z" fill="#234a80" stroke="none" /></svg></button>
            <button aria-label="Sweep"><svg class="ico" viewBox="0 0 18 18"><path d="M2 4c4-4 10-2 8 2 4-1 7 1 6 4v6l-5 1v-6H6l-5-4z" fill="#83a9dc" stroke="#4571ab" /><path d="M3 5c3-3 6-2 6 1M7 9l7-1" stroke="#e3edf9" stroke-width="1.5" /></svg></button>
            <button aria-label="Revolve"><svg class="ico" viewBox="0 0 18 18"><path d="M2 9h12l3 2v4l-4 2H5l-3-3z" fill="#5d8ac4" stroke="#3a639c" /><path d="M2 9l4-2h8l3 3-4 1H5z" fill="#cfe0f5" stroke="#3a639c" stroke-width=".6" /><path d="M4 4c3-3 8-3 11 1" stroke="#223f70" stroke-width="1.5" /><path d="M2 6V1l4 3z" fill="#223f70" stroke="none" /></svg></button>
            <button aria-label="Loft"><svg class="ico" viewBox="0 0 18 18"><path d="M2 6l14-4v10c-1 3-4 4-6 4H3z" fill="#6f9ad4" stroke="#4571ab" stroke-width=".6" /><circle cx="7" cy="11" r="4.5" fill="#dfeafa" stroke="#4571ab" /><path d="M8 7l8-5" stroke="#e3edf9" stroke-width="2" /></svg></button>
            <span class="sep"></span>
            <button aria-label="Union"><svg class="ico" viewBox="0 0 18 18"><use href="#rings" fill="#a9c9d8" stroke="#2c5a8c" /><path d="M9 5c3 2 3 6 0 8M9 5c-3 2-3 6 0 8" class="blue" /></svg></button>
            <button aria-label="Subtract"><svg class="ico" viewBox="0 0 18 18"><use href="#rings" fill="#fff" stroke="#2c5a8c" /><path d="M9 5C3 2 1 6 1 9s2 7 8 4c-3-2-3-6 0-8z" fill="#a9c9d8" class="blue" /><path d="M9 5c3 2 3 6 0 8" class="blue" /></svg></button>
            <button aria-label="Intersect"><svg class="ico" viewBox="0 0 18 18"><use href="#rings" fill="#fff" stroke="#2c5a8c" /><path d="M9 5c3 2 3 6 0 8-3-2-3-6 0-8z" fill="#a9c9d8" class="blue" /></svg></button>
            <span class="sep"></span>
            <button aria-label="3D Move Grip"><svg class="ico" viewBox="0 0 18 18"><path d="M9 2L2 5v8l7 4 7-4V5z" stroke="#333" stroke-dasharray="2 1" /><path d="M9 3v7" stroke="#2050b0" /><path d="M9 10l-6 3" stroke="#222" /><path d="M9 10l6 3" stroke="#d02020" /><path d="M8 1h3v3H8z" class="node" /><path d="M1 11h3v4H1z" fill="#172" stroke="none" /><path d="M14 11h4v4h-4z" fill="#d02020" stroke="none" /></svg></button>
            <button aria-label="3D Rotate"><svg class="ico" viewBox="0 0 18 18"><circle cx="9" cy="9" r="7.5" stroke="#2050a0" /><ellipse cx="9" cy="9" rx="3.5" ry="7.5" stroke="#c03030" stroke-width="1.3" /><path d="M2 6h14M2 12h14" stroke="#308070" /><path d="M8 8h2v2H8z" class="node" /></svg></button>
            <button aria-label="3D Align Faces"><svg class="ico" viewBox="0 0 18 18"><path d="M2 3l8-2v13l-8 2z" fill="#ccc" stroke="#888" /><text x="4" y="11" class="tiny">0</text><circle cx="14" cy="14" r="2" stroke="#111" stroke-width="1.4" /><path d="M16 9l-4-3M12 9V5h4" stroke="#111" stroke-width="1.3" /></svg></button>
          </div>
        </div>
      </div>

      <section class="drawing">
        <svg class="canvas" role="img" aria-label="Isometric wireframe model">
          <!-- upright box -->
          <path d="M440 103l35-20 117 68-34 19zM440 372l35-20 117 68-34 19zM440 103v269M475 83v269M592 151v269M558 170v269" />
          <!-- base slab -->
          <path d="M691 194l175 101-279 161-175-101zM691 221l175 101-279 161-175-101zM691 194v27M866 295v27M587 456v27M412 355v27" />
          <!-- cursor -->
          <path d="M103 29l57-32" stroke="#b01818" />
          <path d="M90 1l49 28" stroke="#188a18" />
          <path d="M121 0v39" stroke="#2020b0" />
          <path d="M118 16h6v5h-6z" stroke="#6a9a5a" />
          <!-- UCS icon -->
          <g class="ucs">
            <path d="M76 496v54M76 550l-39-22M76 550l40-22" />
            <path d="M28 523l14 5-2 6-3 1zM124 523l-14 5 2 6 3 1z" />
            <path d="M36 525l-1 8M116 525l1 8" />
            <path d="M68 550l8-4 8 4-8 4z" />
            <path d="M72 552l8-4M72 548l8 4" />
            <text x="70" y="487">Z</text>
            <text x="11" y="522">Y</text>
            <text x="133" y="522">X</text>
          </g>
        </svg>
        <div class="tabs">
          <button class="step" aria-label="First tab"><svg class="ico" viewBox="0 0 18 18"><path d="M4.5 4v10" stroke="#666" stroke-width="1.5" /><path d="M12 4v10L6 9z" fill="#666" stroke="none" /></svg></button>
          <button class="step" aria-label="Previous tab"><svg class="ico" viewBox="0 0 18 18"><path d="M12 4v10L6 9z" fill="#666" stroke="none" /></svg></button>
          <button class="step" aria-label="Next tab"><svg class="ico" viewBox="0 0 18 18"><path d="M6 4v10l6-5z" fill="#666" stroke="none" /></svg></button>
          <button class="step" aria-label="Last tab"><svg class="ico" viewBox="0 0 18 18"><path d="M13.5 4v10" stroke="#666" stroke-width="1.5" /><path d="M6 4v10l6-5z" fill="#666" stroke="none" /></svg></button>
          <button class="tab current">Model</button>
          <button class="tab">Layout1</button>
          <button class="tab">Layout2</button>
        </div>
      </section>
    </main>

    <section class="command">
      <span class="grip"></span>
      <div class="command-box">
        <div class="history">
          <output>Command:</output>
          <div class="scroll-y">
            <button aria-label="Scroll up"><svg class="ico" viewBox="0 0 18 18"><path d="M4 12l5-6 5 6z" fill="#444" stroke="none" /></svg></button>
            <button aria-label="Scroll down"><svg class="ico" viewBox="0 0 18 18"><path d="M4 6l5 6 5-6z" fill="#444" stroke="none" /></svg></button>
          </div>
        </div>
        <div class="prompt">
          <label for="cmd">Command:</label>
          <input id="cmd" type="text">
          <div class="scroll-x">
            <button aria-label="Scroll left"><svg class="ico" viewBox="0 0 18 18"><path d="M12 4v10L6 9z" fill="#444" stroke="none" /></svg></button>
            <span class="thumb"></span>
            <button aria-label="Scroll right"><svg class="ico" viewBox="0 0 18 18"><path d="M6 4v10l6-5z" fill="#444" stroke="none" /></svg></button>
          </div>
        </div>
      </div>
    </section>

    <footer class="status">Defines a new coordinate system based on a selected face:&nbsp; UCS</footer>
  </body>
</html>
```
FILE: styles.css
```
* {
  box-sizing: border-box;
}

body {
  margin: 0;
  height: 100vh;
  display: flex;
  flex-direction: column;
  overflow: hidden;
  background: #f0f0f0;
  font: 11px/16px "Liberation Sans", Arial, sans-serif;
  color: #111;
}

ul {
  list-style: none;
  margin: 0;
  padding: 0;
}

button {
  border: none;
  padding: 0;
  background: none;
  font: inherit;
  color: inherit;
}

.defs {
  position: absolute;
}

/* icons */
.ico {
  width: 18px;
  height: 18px;
  flex: none;
  display: block;
  fill: none;
  stroke: #333;
}

.ico text {
  stroke: none;
  fill: #111;
  font-family: "Liberation Sans", Arial, sans-serif;
}
.ico .blue {
  stroke: #2d66a8;
}
.ico .gray {
  stroke: #777;
}
.ico .node {
  fill: #1673b8;
  stroke: none;
}
.ico .dot {
  fill: #111;
  stroke: none;
}
.ico .face {
  fill: #2a65ae;
  stroke: #1d4f94;
}
.ico .tiny {
  font-size: 8px;
  font-weight: bold;
}
.ico .tiny-blue {
  font-size: 7px;
  fill: #2d66a8;
}
.ico .small {
  font-size: 9px;
  fill: #1f5ca6;
}
.ico .letter {
  font-size: 16px;
}
.ico .help-mark {
  font-size: 14px;
  font-weight: bold;
  fill: #fff;
}

/* title bar */
.titlebar {
  display: flex;
  align-items: center;
  height: 22px;
  border-bottom: 1px solid #3c3a33;
  background: linear-gradient(to right, #c6c2b0, #beb9a6 22%, #958e74 30%, #8f896f 60%, #a39e90 88%, #8a8470);
}

.titlebar h1 {
  flex: 1;
  margin: 0 0 0 6px;
  font: 12px/20px "Open Sans", "Noto Sans", sans-serif;
}

.app-logo {
  width: 16px;
  height: 16px;
}

.glass-spot {
  width: 36px;
  height: 16px;
  margin-right: 6px;
  background: #80406f;
  filter: blur(3px);
}

.window-buttons {
  display: flex;
  align-self: flex-start;
  margin-right: 3px;
  border: 1px solid #55504a;
  border-top: none;
  border-radius: 0 0 5px 5px;
  overflow: hidden;
}

.window-buttons button {
  width: 27px;
  height: 17px;
  display: flex;
  align-items: center;
  justify-content: center;
  border-right: 1px solid #55504a;
  background: linear-gradient(#c4bdb5, #a69e94 50%, #7b7268 50%, #a09788);
}

.window-buttons .close {
  width: 47px;
  border-right: none;
  background: linear-gradient(#e59a85, #d5573c 50%, #b92a10 50%, #dd6a3c);
}

.window-buttons .ico {
  width: 16px;
  height: 16px;
}

/* menu bar */
.menubar {
  display: flex;
  align-items: stretch;
  height: 20px;
  padding-left: 5px;
  border-bottom: 1px solid #b4b9cc;
  background: linear-gradient(#fff, #f0f2fb 35%, #d5dbf1 40%, #d9dff5);
  font: 11px/18px "Noto Sans", "Open Sans", sans-serif;
}

.menus {
  display: flex;
  flex: 1;
}

.menus > li {
  position: relative;
}

.menus > li > button {
  height: 19px;
  padding: 0 7px;
}

.menus > .open > button {
  border: 1px solid #6d6f7c;
  border-radius: 3px;
  padding: 0 6px;
  line-height: 17px;
  background: linear-gradient(#c9cbd8, #b6b9c9);
}

.menu {
  position: absolute;
  z-index: 10;
  top: 19px;
  left: -1px;
  width: 229px;
  padding: 3px 2px 1px;
  border: 1px solid #979797;
  background: #f0f0f0;
  box-shadow: 3px 3px 3px rgba(0, 0, 0, 0.5);
}

.menu > li {
  position: relative;
}

/* "pre" keeps the spaces next to the underlined letters */
.menu button {
  display: flex;
  align-items: center;
  width: 100%;
  height: 20px;
  padding: 0 7px 0 25px;
  text-align: left;
  white-space: pre;
}

.menu button .ico {
  width: 16px;
  height: 16px;
  margin: 0 6px 0 -22px;
}

.menu u {
  text-underline-offset: 1px;
}

.menu kbd {
  margin-left: auto;
  font: inherit;
}

.menu .rule {
  height: 9px;
  padding: 2px 1px 0;
}

.menu .rule::before {
  content: "";
  display: block;
  height: 2px;
  border-top: 1px solid #a0a0a0;
  background: #fff;
}

.menu .checked button {
  height: 22px;
  padding-left: 1px;
}

.menu .checked .ico {
  width: 20px;
  height: 20px;
  margin: 0 4px 0 0;
  padding: 1px;
  border: 1px solid #3399ff;
  background: #fff;
}

.menu .sub > button::after {
  content: "";
  margin: -3px 0 0 auto;
  border: 4px solid transparent;
  border-left: 5px solid #111;
  border-right: none;
}

.menu .active > button {
  background: #2a99ff;
  color: #fff;
}

.menu .sub.active > button::after {
  border-left-color: #fff;
}

.submenu {
  top: -4px;
  left: 221px;
  width: 145px;
  color: #111;
}

.ask {
  width: 268px;
  height: 19px;
  border: none;
  border-left: 1px solid #c5cade;
  padding: 1px 4px 0;
  background: #fff;
  font: 11px/18px Roboto, "Liberation Sans", sans-serif;
}

.ask::placeholder {
  color: #666;
  opacity: 1;
}

.info-buttons {
  display: flex;
  height: 18px;
  border: 1px solid #a9adbd;
  border-radius: 3px;
  background: #f3f4fa;
}

.info-buttons button {
  border-left: 1px solid #c3c6d3;
}

.info-buttons button:first-child,
.info-buttons .drop {
  border-left: none;
}

.info-buttons .ico,
.doc-buttons .ico {
  width: 16px;
  height: 16px;
}

.info-buttons .drop {
  width: 12px;
}

.info-buttons .drop::after {
  content: "";
  display: block;
  margin: 0 auto;
  width: 0;
  border: 2px solid transparent;
  border-top-color: #333;
  border-bottom: none;
}

.doc-buttons {
  display: flex;
  gap: 2px;
  margin-left: 3px;
}

.doc-buttons button {
  width: 18px;
  height: 18px;
  border: 1px solid #9db4cf;
  background: #dceaf8;
}

/* toolbars */
.toolbar-row {
  display: flex;
  flex: none;
  gap: 2px;
  height: 28px;
  white-space: nowrap;
}

.toolbar {
  display: flex;
  align-items: center;
  padding: 2px 4px 0 0;
  border: solid #a0a0a0;
  border-width: 0 1px 1px 0;
  box-shadow: inset 0 1px #fff;
}

.toolbar button {
  display: flex;
  align-items: center;
  justify-content: center;
  width: 23px;
  height: 22px;
}

.toolbar .wide {
  width: 35px;
}

.grip {
  flex: none;
  width: 8px;
  height: 24px;
  margin: 0 3px 0 2px;
  border: solid #a0a0a0;
  border-width: 0 1px;
  background: linear-gradient(to right, #fff 3px, #a0a0a0 3px, #a0a0a0 4px, #fff 4px);
}

.sep {
  flex: none;
  width: 6px;
  height: 20px;
  border-right: 3px solid transparent;
  border-left: 2px solid transparent;
  background: #999;
  background-clip: padding-box;
}

.combo {
  position: relative;
  display: flex;
  align-items: center;
  height: 22px;
  border: 1px solid #e2e3ea;
  background: #fff;
}

.combo::after {
  content: "";
  position: absolute;
  right: 4px;
  top: 9px;
  border: 4px solid transparent;
  border-top-color: #111;
  border-bottom: none;
  pointer-events: none;
}

.combo select {
  flex: 1;
  appearance: none;
  border: none;
  padding: 0;
  background: none;
  font: inherit;
  color: #111;
}

.combo .ico {
  width: 16px;
  height: 16px;
}

.style-combo {
  width: 118px;
  padding-left: 18px;
}

.view-combo {
  width: 138px;
}

.view-combo.disabled {
  border: 1px solid #bcbcbc;
  border-radius: 2px;
  background: linear-gradient(to right, #eee 118px, #fff 118px);
}

.view-combo.disabled::after {
  border-top-color: #aaa;
}

.layer-combo {
  width: 298px;
  gap: 1px;
  padding-left: 3px;
}

.swatch {
  width: 10px;
  height: 10px;
  margin: 0 3px 0 0;
  border: 1px solid #111;
}

/* docked tool columns */
.workspace {
  flex: 1;
  display: flex;
  min-height: 0;
}

.dock {
  display: flex;
  flex: none;
  gap: 1px;
  padding-right: 1px;
}

.dock-column {
  display: flex;
  flex-direction: column;
  gap: 1px;
}

.toolbar.vertical {
  flex-direction: column;
  width: 25px;
  padding: 0 0 4px;
}

.vertical .grip {
  width: 20px;
  height: 8px;
  margin: 3px 0 0;
  border-width: 1px 0;
  background: linear-gradient(#fff 3px, #a0a0a0 3px, #a0a0a0 4px, #fff 4px);
}

.vertical .sep {
  width: 20px;
  height: 6px;
  border: solid transparent;
  border-width: 2px 0 3px;
}

/* drawing area */
.drawing {
  flex: 1;
  display: flex;
  flex-direction: column;
  min-width: 0;
  margin-right: 2px;
  border: solid #777;
  border-width: 2px 0 0 2px;
}

.canvas {
  flex: 1;
  width: 100%;
  min-height: 0;
  background: #000;
  fill: none;
  stroke: #fff;
  shape-rendering: crispEdges;
}

.ucs text {
  font: 300 20px "Open Sans", sans-serif;
  fill: #fff;
  stroke: none;
}

.tabs {
  display: flex;
  height: 17px;
  border-top: 1px solid #888;
  background: #f0f0f0;
}

.tabs .step {
  width: 15px;
  border-right: 1px solid #a0a0a0;
  border-bottom: 1px solid #a0a0a0;
}

.step .ico {
  width: 14px;
  height: 14px;
}

.tab {
  position: relative;
  padding: 0 8px;
  line-height: 16px;
}

.tab::after {
  content: "";
  position: absolute;
  right: -1px;
  top: 0;
  height: 15px;
  border-right: 1px solid #555;
  transform: skewX(-25deg);
}

.tab.current {
  padding: 0 13px 0 12px;
  background: #000;
  color: #fff;
  clip-path: polygon(0 0, 100% 0, calc(100% - 6px) 100%, 5px 100%);
}

.tab.current + .tab {
  margin-left: -6px;
}

/* command window */
.command {
  display: flex;
  flex: none;
  margin-top: 5px;
  padding: 9px 7px 2px 6px;
  border-top: 2px solid #808080;
  box-shadow: 0 -3px #fff;
  font: 13px/20px "Liberation Mono", "Courier New", monospace;
}

.command .grip {
  height: 40px;
  margin: 0 2px 0 0;
}

.command-box {
  flex: 1;
  border: solid #777;
  border-width: 2px 0 0 2px;
}

.history {
  display: flex;
  height: 23px;
  border-bottom: 1px solid #999;
  background: #fff;
}

.history output {
  flex: 1;
}

.scroll-y {
  display: flex;
  flex-direction: column;
  width: 17px;
  background: #eee;
}

.scroll-y button {
  flex: 1;
}

.scroll-y .ico {
  width: 11px;
  height: 11px;
  margin: 0 auto;
}

.prompt {
  display: flex;
  align-items: center;
  height: 20px;
  margin-right: 17px;
  background: #fff;
}

.prompt input {
  flex: 1;
  height: 18px;
  border: none;
  padding: 0 4px;
  background: none;
  font: inherit;
}

.scroll-x {
  display: flex;
  align-items: center;
  width: 70px;
  height: 17px;
  padding: 0 2px 0 4px;
  background: #eee;
}

.scroll-x button:last-child {
  margin-left: auto;
}

.scroll-x .ico {
  width: 15px;
  height: 15px;
}

.thumb {
  width: 14px;
  height: 15px;
  margin-left: 1px;
  border: 1px solid #999;
  border-radius: 2px;
  background: linear-gradient(#f5f5f5, #dcdcdc 50%, #c8c8cc 50%, #ddd);
}

/* status bar */
.status {
  flex: none;
  height: 23px;
  padding: 4px 7px 0;
  border-top: 1px solid #999;
  border-bottom: 2px solid #8a7d68;
  background: #f0ebe8;
  box-shadow: inset 0 2px #fff;
  line-height: 17px;
}
```
